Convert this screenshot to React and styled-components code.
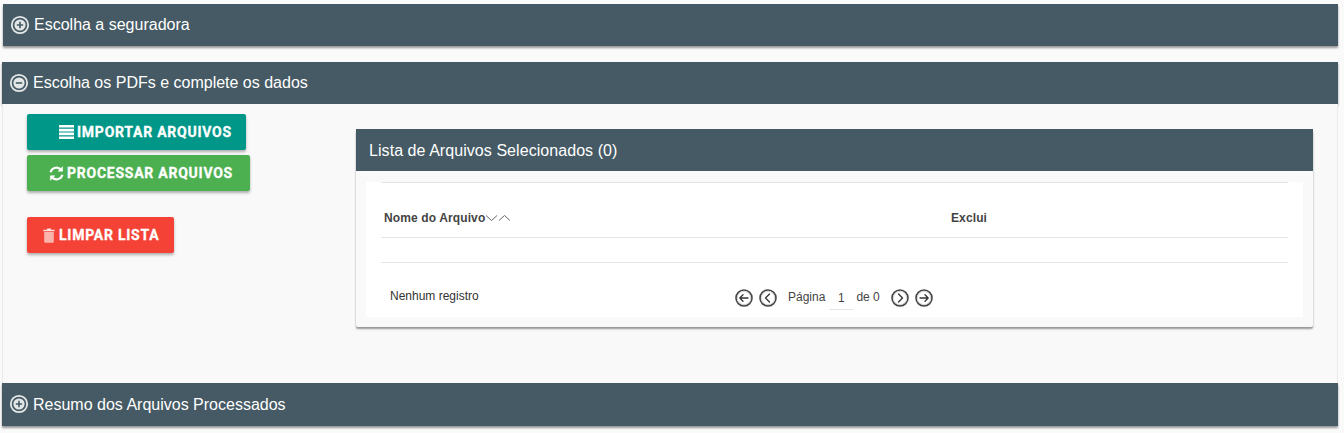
import React from "react";
import styled, { createGlobalStyle } from "styled-components";

const slate = "#455a64";

const Global = createGlobalStyle`
    html, body {
        margin: 0;
        padding: 0;
        background: #fafafa;
        font-family: "Liberation Sans", Arial, sans-serif;
    }
`;

const Page = styled.div`
    width: 1344px;
    height: 433px;
    overflow: hidden;
    padding: 4px 6px 0 2px;
    box-sizing: border-box;
    display: flex;
    flex-direction: column;
`;

const Section = styled.section`
    margin-left: ${(p) => (p.$inset ? "1px" : "0")};
    margin-bottom: ${(p) => (p.$inset ? "16px" : "0")};
`;

const SectionBar = styled.div`
    height: ${(p) => (p.$tall ? 43 : 42)}px;
    background: ${slate};
    color: #fff;
    display: flex;
    align-items: center;
    gap: 4px;
    padding-left: 7px;
    font-size: 16px;
    box-shadow: 0 2px 2px rgba(0, 0, 0, 0.4);
`;

const SectionBody = styled.div`
    height: 279px;
    box-sizing: border-box;
    background: #f9f9f9;
    border-left: 1px solid #eaeaea;
    border-right: 1px solid #eaeaea;
    display: flex;
`;

const Actions = styled.div`
    width: 353px;
    flex: none;
    box-sizing: border-box;
    padding: 10px 0 0 24px;
    display: flex;
    flex-direction: column;
    align-items: flex-start;
`;

const ActionButton = styled.button`
    height: 36px;
    width: ${(p) => p.$width}px;
    margin-bottom: ${(p) => p.$gap}px;
    padding: 0 0 0 ${(p) => p.$pad}px;
    border: none;
    border-radius: 2px;
    background: ${(p) => p.$color};
    color: #fff;
    display: flex;
    align-items: center;
    gap: 3px;
    font-family: Roboto, "Liberation Sans", sans-serif;
    font-size: 14px;
    font-weight: 700;
    letter-spacing: 0.75px;
    -webkit-text-stroke: 0.3px #fff;
    white-space: nowrap;
    box-shadow: 0 2px 3px rgba(0, 0, 0, 0.3);
`;

const ListCard = styled.div`
    width: 957px;
    height: 198px;
    margin-top: 25px;
    background: #f9f9f9;
    border-radius: 2px;
    box-shadow: 0 2px 2px rgba(0, 0, 0, 0.4);
`;

const CardHeader = styled.div`
    height: 42px;
    box-sizing: border-box;
    padding: 1px 0 0 13px;
    background: ${slate};
    color: #fff;
    display: flex;
    align-items: center;
    font-size: 16px;
    letter-spacing: 0.06px;
`;

const CardInner = styled.div`
    margin: 11px 10px 0;
    height: 135px;
    background: #fff;
    padding: 0 15px;
    box-sizing: border-box;
`;

const HeadRow = styled.div`
    height: 56px;
    border-top: 1px solid #e4e4e4;
    border-bottom: 1px solid #e4e4e4;
    box-sizing: border-box;
    display: flex;
    align-items: center;
    font-size: 12px;
    font-weight: 700;
    letter-spacing: 0.12px;
    color: #444;
    padding: 15px 0 0 3px;
`;

const NameColumn = styled.div`
    width: 567px;
    display: flex;
    align-items: center;
`;

const EmptyRow = styled.div`
    height: 25px;
    border-bottom: 1px solid #e4e4e4;
    box-sizing: border-box;
`;

const FooterRow = styled.div`
    height: 54px;
    box-sizing: border-box;
    display: flex;
    align-items: center;
    padding: 15px 0 0 9px;
    font-size: 12px;
    color: #333;
`;

const NoRecords = styled.div`
    width: 345px;
    margin-top: -4px;
`;

const Pager = styled.div`
    display: flex;
    align-items: center;
    gap: 6px;
    color: #444;
`;

const PagerLabel = styled.span`
    margin: -2px ${(p) => p.$right}px 0 ${(p) => p.$left}px;
`;

const PageBox = styled.span`
    width: 24px;
    height: 24px;
    box-sizing: border-box;
    border-bottom: 1px solid #e4e4e4;
    display: flex;
    align-items: center;
    justify-content: center;
    margin: 0 -4px -1px -2px;
`;

const SectionIcon = ({ minus }) => (
    <svg width="20" height="20" viewBox="0 0 20 20" fill="none" style={{ flex: "none", marginTop: "-1px" }}>
        <circle cx="10" cy="10" r="8.2" stroke="#e4e7e8" strokeWidth="1.8" />
        <circle cx="10" cy="10" r="5.6" fill="#e4e7e8" />
        <path d={minus ? "M6.8 10h6.4" : "M6.8 10h6.4M10 6.8v6.4"} stroke={slate} strokeWidth="1.6" />
    </svg>
);

const PagerIcon = ({ d }) => (
    <svg width="18" height="18" viewBox="0 0 18 18" fill="none" style={{ flex: "none" }}>
        <circle cx="9" cy="9" r="8" stroke="#444" strokeWidth="1.6" />
        <circle cx="9" cy="9" r="6.7" stroke="#ccc" strokeWidth="0.8" />
        <path d={d} stroke="#333" strokeWidth="1.3" strokeLinecap="round" strokeLinejoin="round" />
    </svg>
);

const ListIcon = () => (
    <svg width="15" height="14" viewBox="0 0 15 14" fill="#fff" style={{ flex: "none" }}>
        <path d="M0 0h15v2.6H0zM0 3.8h15v2.6H0zM0 7.6h15v2.6H0zM0 11.4h15V14H0z" />
    </svg>
);

const RefreshIcon = () => (
    <svg width="15" height="15" viewBox="0 0 15 15" fill="none" stroke="#fff" strokeWidth="2.1" style={{ flex: "none" }}>
        <path d="M1.6 6.2A6 6 0 0 1 12.2 4" />
        <path d="M13.4 8.8A6 6 0 0 1 2.8 11" />
        <path d="M13.6 0.8v4.4H9.2z" fill="#fff" strokeWidth="0.6" />
        <path d="M1.4 14.2V9.8h4.4z" fill="#fff" strokeWidth="0.6" />
    </svg>
);

const TrashIcon = () => (
    <svg width="13" height="15" viewBox="0 0 13 15" style={{ flex: "none" }}>
        <path d="M4 0.5h4v1.2h3.6v1.6H0.4V1.7H4z" fill="#fff" fillOpacity="0.85" />
        <path d="M1.2 4h9.6v9.6a1.2 1.2 0 0 1-1.2 1.2H2.4a1.2 1.2 0 0 1-1.2-1.2z" fill="#fff" fillOpacity="0.6" />
    </svg>
);

const SortIcon = () => (
    <svg width="26" height="8" viewBox="0 0 26 8" fill="none" stroke="#666" strokeWidth="1" style={{ flex: "none" }}>
        <path d="M1 1.5l5.5 5 5.5-5" />
        <path d="M14 6.5l5.5-5 5.5 5" />
    </svg>
);

export default function App() {
    return (
        <>
            <Global />
            <Page>
                <Section $inset>
                    <SectionBar>
                        <SectionIcon />
                        Escolha a seguradora
                    </SectionBar>
                </Section>
                <Section>
                    <SectionBar>
                        <SectionIcon minus />
                        Escolha os PDFs e complete os dados
                    </SectionBar>
                    <SectionBody>
                        <Actions>
                            <ActionButton $color="#009688" $width={219} $pad={32} $gap={5}>
                                <ListIcon />
                                IMPORTAR ARQUIVOS
                            </ActionButton>
                            <ActionButton $color="#4caf50" $width={223} $pad={22} $gap={26}>
                                <RefreshIcon />
                                PROCESSAR ARQUIVOS
                            </ActionButton>
                            <ActionButton $color="#f44336" $width={147} $pad={16} $gap={0}>
                                <TrashIcon />
                                LIMPAR LISTA
                            </ActionButton>
                        </Actions>
                        <ListCard>
                            <CardHeader>Lista de Arquivos Selecionados (0)</CardHeader>
                            <CardInner>
                                <HeadRow>
                                    <NameColumn>
                                        Nome do Arquivo
                                        <SortIcon />
                                    </NameColumn>
                                    Exclui
                                </HeadRow>
                                <EmptyRow />
                                <FooterRow>
                                    <NoRecords>Nenhum registro</NoRecords>
                                    <Pager>
                                        <PagerIcon d="M13 9H5M8 5.8L4.8 9 8 12.2" />
                                        <PagerIcon d="M10.5 5L6.5 9l4 4" />
                                        <PagerLabel $left={5} $right={0}>Página</PagerLabel>
                                        <PageBox>1</PageBox>
                                        <PagerLabel $left={1} $right={5}>de 0</PagerLabel>
                                        <PagerIcon d="M7.5 5l4 4-4 4" />
                                        <PagerIcon d="M5 9h8M10 5.8L13.2 9 10 12.2" />
                                    </Pager>
                                </FooterRow>
                            </CardInner>
                        </ListCard>
                    </SectionBody>
                    <SectionBar $tall>
                        <SectionIcon />
                        Resumo dos Arquivos Processados
                    </SectionBar>
                </Section>
            </Page>
        </>
    );
}
